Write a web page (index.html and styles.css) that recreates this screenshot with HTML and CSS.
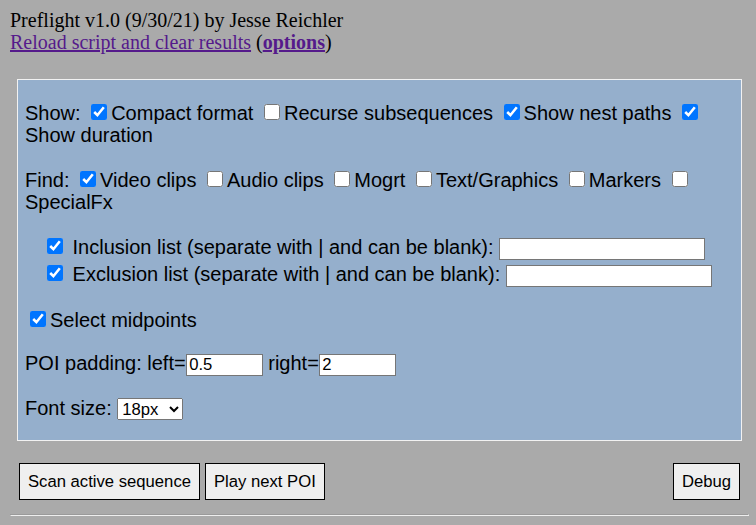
FILE: index.html
```html
<!DOCTYPE html>
<html>
<head>
<meta charset="utf-8">
<link rel="stylesheet" href="styles.css">
</head>
<body>
<div class="header">
  <div>Preflight v1.0 (9/30/21) by Jesse Reichler</div>
  <div><a href="#" class="link">Reload script and clear results</a> (<a href="#" class="link bold">options</a>)</div>
</div>
<div class="panel">
  <div class="sec">Show: <input type="checkbox" class="cb" checked>Compact format <input type="checkbox" class="cb">Recurse subsequences <input type="checkbox" class="cb" checked>Show nest paths <input type="checkbox" class="cb" checked>Show duration</div>
  <div class="sec find">Find: <input type="checkbox" class="cb" checked>Video clips <input type="checkbox" class="cb">Audio clips <input type="checkbox" class="cb">Mogrt <input type="checkbox" class="cb">Text/Graphics <input type="checkbox" class="cb">Markers <input type="checkbox" class="cb">SpecialFx</div>
  <div class="sec lists">
    <div class="row"><input type="checkbox" class="cb" checked> Inclusion list (separate with | and can be blank): <input type="text" class="txt wide"></div>
    <div class="row"><input type="checkbox" class="cb" checked> Exclusion list (separate with | and can be blank): <input type="text" class="txt wide"></div>
  </div>
  <div class="sec mid"><input type="checkbox" class="cb" checked>Select midpoints</div>
  <div class="sec poi">POI padding: left=<input type="text" class="txt narrow" value="0.5"> right=<input type="text" class="txt narrow" value="2"></div>
  <div class="sec fs">Font size: <select class="sel"><option>18px</option></select></div>
</div>
<div class="buttons">
  <button class="btn">Scan active sequence</button>
  <button class="btn">Play next POI</button>
  <button class="btn debug">Debug</button>
</div>
<hr class="rule">
</body>
</html>
```
FILE: styles.css
```css
html {
  background: #aaaaaa;
}
body {
  margin: 9px 7px 0 10px;
  background: #aaaaaa;
  font-family: "Liberation Sans", Arial, sans-serif;
  color: #000;
}
.header {
  font-family: "Liberation Serif", "Times New Roman", serif;
  font-size: 20px;
  line-height: 22px;
}
.link {
  color: #551a8b;
  text-decoration: underline;
}
.bold {
  font-weight: bold;
}
.panel {
  margin: 26px 7px 0 7px;
  border: 1px solid #f2f2f2;
  background: #95afcc;
  padding: 22px 7px 20px 7px;
  font-size: 20px;
  line-height: 22px;
}
.cb {
  width: 16.25px;
  height: 16.25px;
  margin: 0 3.75px 0 5px;
  vertical-align: baseline;
}
.find {
  margin-top: 23px;
}
.lists {
  margin-top: 23px;
  padding-left: 17px;
  display: flex;
  flex-direction: column;
  gap: 3px;
}
.mid {
  margin-top: 22px;
}
.poi {
  margin-top: 21px;
}
.fs {
  margin-top: 21px;
}
.txt {
  font-family: "Liberation Sans", Arial, sans-serif;
  font-size: 16.67px;
  height: 22px;
  box-sizing: border-box;
  border: 1px solid #767676;
  border-radius: 0;
  padding: 0 2.5px;
  margin: 0;
  background: #fff;
  vertical-align: baseline;
}
.wide {
  width: 206px;
}
.narrow {
  width: 77px;
}
.sel {
  font-family: "Liberation Sans", Arial, sans-serif;
  font-size: 16.67px;
  height: 22px;
  width: 66px;
  margin: 0;
  vertical-align: baseline;
}
.buttons {
  margin-top: 22px;
  padding: 0 9px;
  display: flex;
  gap: 5px;
}
.btn {
  font-family: "Liberation Sans", Arial, sans-serif;
  font-size: 16.67px;
  line-height: 19px;
  padding: 8px;
  margin: 0;
  border: 1px solid #000;
  border-radius: 0;
  background: #efefef;
  color: #000;
}
.debug {
  margin-left: auto;
}
.rule {
  margin: 14px 0 0 0;
  height: 0;
  border-style: solid;
  border-width: 1px;
  border-color: #9a9a9a #eeeeee #eeeeee #9a9a9a;
}
```
